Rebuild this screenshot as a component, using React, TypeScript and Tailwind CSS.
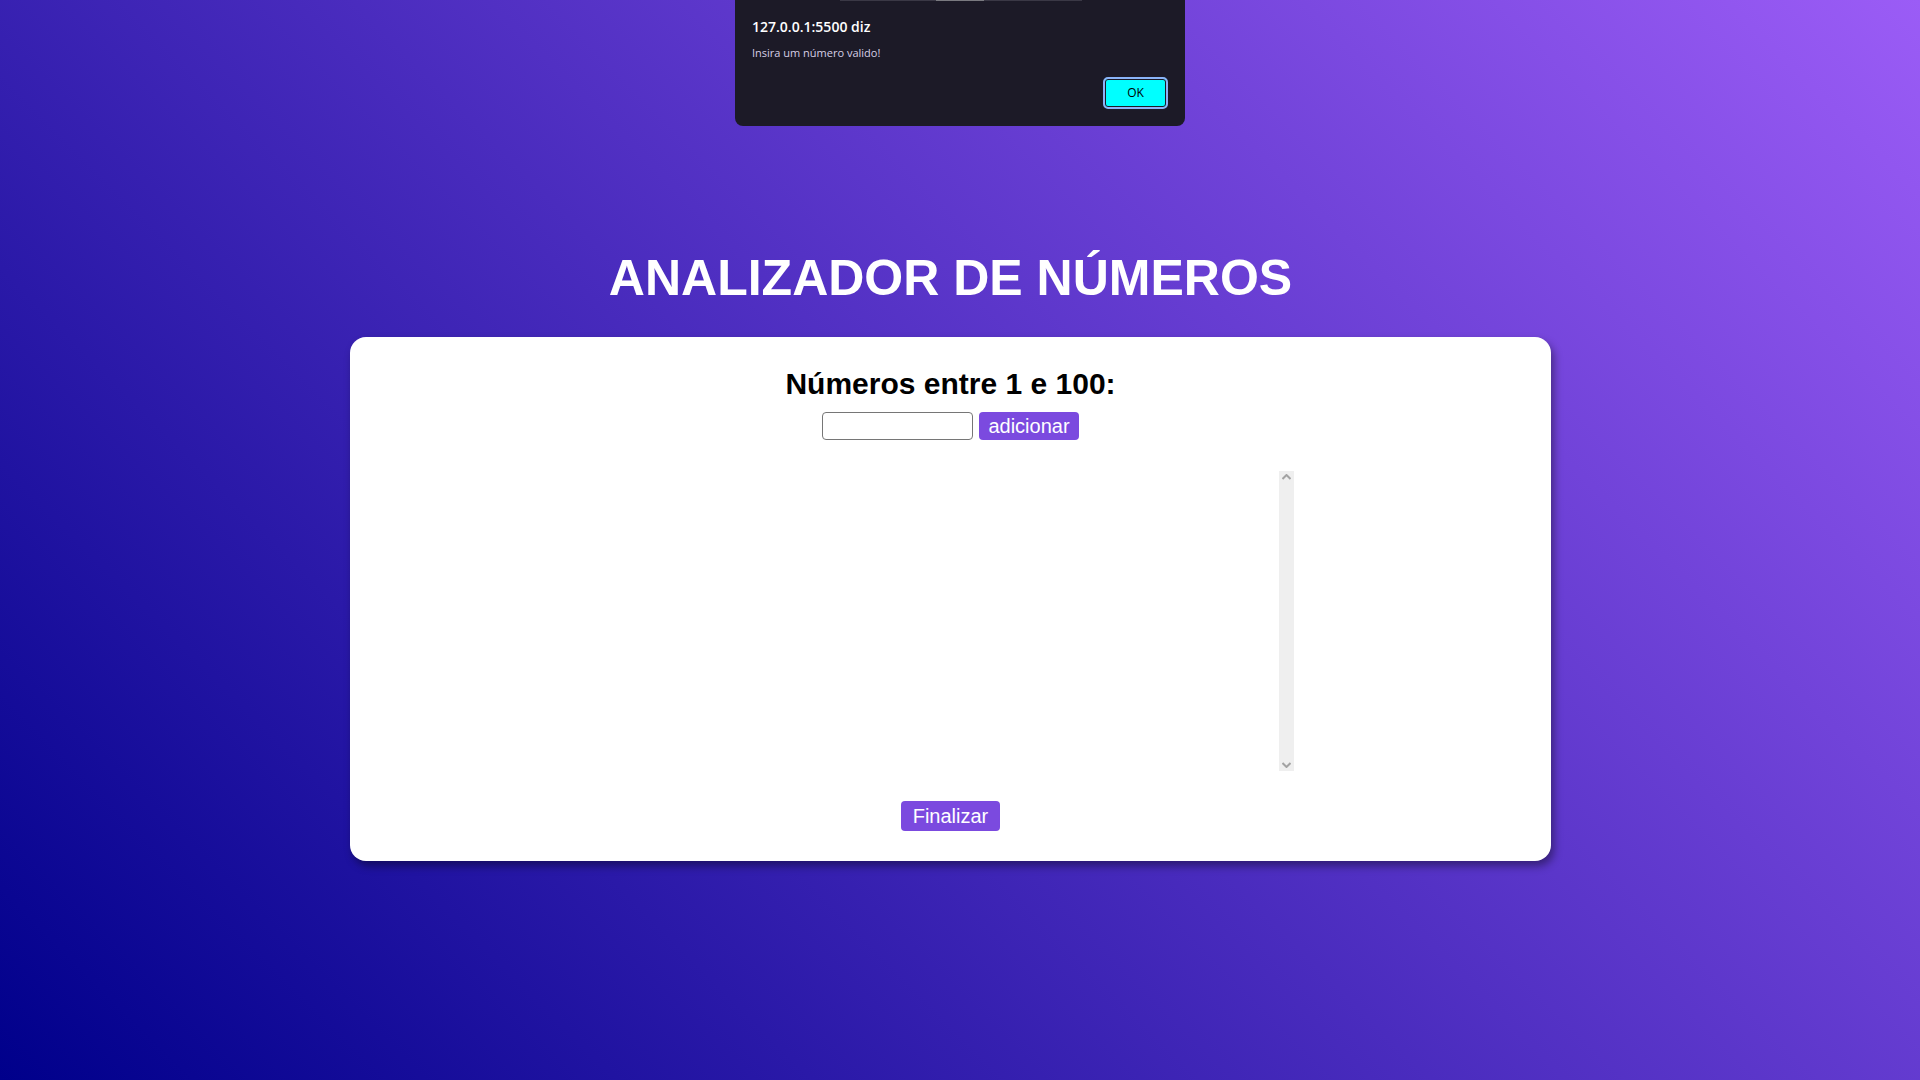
export default function App() {
  return (
    <div className="relative min-h-screen w-full bg-[linear-gradient(45deg,#00008b,#9b5cf6)] font-['Liberation_Sans',Arial,sans-serif]">
      {/* browser alert */}
      <div className="absolute left-1/2 top-0 z-10 w-[450px] -translate-x-1/2 rounded-b-lg bg-[#1c1a27] px-[17px] pt-[17px] pb-[17px] font-['Open_Sans','Noto_Sans',sans-serif]">
        <div className="absolute left-[105px] top-0 flex h-px w-[242px] bg-[#3a3845]">
          <div className="ml-[96px] h-px w-[48px] bg-[#7a7a80]" />
        </div>
        <p className="text-[14px] font-semibold leading-[20px] text-white">127.0.0.1:5500 diz</p>
        <p className="mt-[8px] text-[11px] leading-[16px] text-[#d6cfe6]">Insira um número valido!</p>
        <div className="mt-[16px] flex justify-end">
          <button className="h-[32px] w-[65px] rounded-[5px] border-2 border-[#8ab4f8] bg-[#00ffff] text-[12px] text-black shadow-[inset_0_0_0_1px_#1c1a27]">
            OK
          </button>
        </div>
      </div>

      <div className="flex flex-col items-center pt-[250px] pr-[19px] pb-10">
        <h1 className="mb-[31px] text-center text-[50px] font-bold leading-[56px] text-white">
          ANALIZADOR DE NÚMEROS
        </h1>

        <div className="flex w-[1201px] flex-col items-center rounded-2xl bg-white pt-[30px] pb-[30px] shadow-[3px_5px_8px_rgba(0,0,0,0.4)]">
          <h2 className="text-[30px] font-bold leading-[34px] text-black">Números entre 1 e 100:</h2>

          <div className="mt-[11px] flex items-center gap-[6px]">
            <input
              type="number"
              className="h-[28px] w-[151px] rounded-[4px] border border-[#767676] bg-white px-1 text-[16px] outline-none"
            />
            <button className="h-[28px] w-[100px] rounded-[4px] bg-[#7b4adf] text-[20px] leading-[28px] text-white">
              adicionar
            </button>
          </div>

          <div className="mt-[31px] flex h-[300px] w-[686px] justify-end bg-white">
            <div className="flex w-[15px] flex-col items-center justify-between bg-[#efefef] py-[3px]">
              <svg width="9" height="6" viewBox="0 0 9 6">
                <path d="M0.5 5L4.5 1L8.5 5" fill="none" stroke="#a3a3a3" strokeWidth="2" />
              </svg>
              <svg width="9" height="6" viewBox="0 0 9 6">
                <path d="M0.5 1L4.5 5L8.5 1" fill="none" stroke="#a3a3a3" strokeWidth="2" />
              </svg>
            </div>
          </div>

          <button className="mt-[30px] h-[30px] w-[99px] rounded-[4px] bg-[#7b4adf] text-[20px] leading-[30px] text-white">
            Finalizar
          </button>
        </div>
      </div>
    </div>
  );
}
